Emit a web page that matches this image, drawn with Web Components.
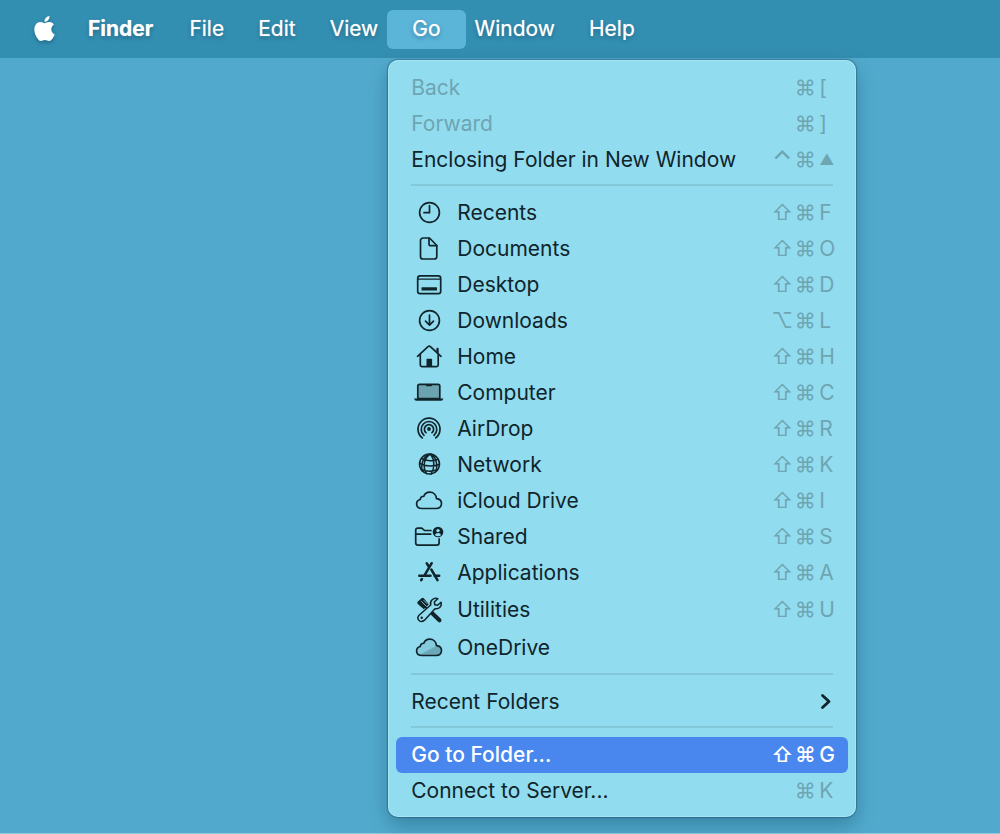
<!DOCTYPE html>
<html lang="en">
<head>
<meta charset="utf-8">
<title>Finder</title>
<style>
html, body { margin: 0; }
body { font-family: Inter, "Liberation Sans", sans-serif; font-size: 21px; line-height: 28px; }
</style>
</head>
<body>
<mac-desktop>
  <menu-bar slot="bar">
    <apple-logo></apple-logo>
    <bar-item strong>Finder</bar-item>
    <bar-item>File</bar-item>
    <bar-item>Edit</bar-item>
    <bar-item>View</bar-item>
    <bar-item open>Go
      <menu-panel slot="menu">
        <menu-row disabled keys=" ,⌘,[">Back</menu-row>
        <menu-row disabled keys=" ,⌘,]">Forward</menu-row>
        <menu-row keys="⌃,⌘,▲">Enclosing Folder in New Window</menu-row>
        <menu-line></menu-line>
        <menu-row icon="clock" keys="⇧,⌘,F">Recents</menu-row>
        <menu-row icon="doc" keys="⇧,⌘,O">Documents</menu-row>
        <menu-row icon="desktop" keys="⇧,⌘,D">Desktop</menu-row>
        <menu-row icon="download" keys="⌥,⌘,L">Downloads</menu-row>
        <menu-row icon="home" keys="⇧,⌘,H">Home</menu-row>
        <menu-row icon="laptop" keys="⇧,⌘,C">Computer</menu-row>
        <menu-row icon="airdrop" keys="⇧,⌘,R">AirDrop</menu-row>
        <menu-row icon="globe" keys="⇧,⌘,K">Network</menu-row>
        <menu-row icon="cloud" keys="⇧,⌘,I">iCloud Drive</menu-row>
        <menu-row icon="shared" keys="⇧,⌘,S">Shared</menu-row>
        <menu-row icon="apps" keys="⇧,⌘,A">Applications</menu-row>
        <menu-row tall icon="tools" keys="⇧,⌘,U">Utilities</menu-row>
        <menu-row tall icon="onedrive">OneDrive</menu-row>
        <menu-line></menu-line>
        <menu-row submenu>Recent Folders</menu-row>
        <menu-line></menu-line>
        <menu-row selected keys="⇧,⌘,G">Go to Folder...</menu-row>
        <menu-row keys=" ,⌘,K">Connect to Server...</menu-row>
      </menu-panel>
    </bar-item>
    <bar-item>Window</bar-item>
    <bar-item>Help</bar-item>
  </menu-bar>
</mac-desktop>

<script>
const define = (name, html, setup) => {
  const template = document.createElement('template');
  template.innerHTML = html;
  customElements.define(name, class extends HTMLElement {
    constructor() {
      super();
      this.attachShadow({ mode: 'open' }).append(template.content.cloneNode(true));
    }
    connectedCallback() { if (setup) setup(this, this.shadowRoot); }
  });
};

define('mac-desktop', `
<style>
:host { display: block; box-sizing: border-box; min-height: 100vh; background: #51aacd; border-bottom: 1px solid #8fcbe0; }
</style>
<slot name="bar"></slot>`);

define('menu-bar', `
<style>
:host { display: block; background: #338fb2; color: #fff; }
nav { display: flex; align-items: center; height: 58px; padding-left: 32px; }
</style>
<nav aria-label="Menu bar"><slot></slot></nav>`);

define('apple-logo', `
<style>
:host { display: block; height: 26px; margin-right: 6px; }
svg { display: block; filter: drop-shadow(0 2px 2px rgba(0,40,60,.35)); overflow: visible; }
</style>
<svg width="25" height="25" viewBox="0 0 24 24" fill="currentColor" role="img" aria-label="Apple"><path d="M12.152 6.896c-.948 0-2.415-1.078-3.96-1.04-2.04.027-3.91 1.183-4.961 3.014-2.117 3.675-.546 9.103 1.519 12.09 1.013 1.454 2.208 3.09 3.792 3.039 1.52-.065 2.09-.987 3.935-.987 1.831 0 2.35.987 3.96.948 1.637-.026 2.676-1.48 3.676-2.948 1.156-1.688 1.636-3.325 1.662-3.415-.039-.013-3.182-1.221-3.22-4.857-.026-3.04 2.48-4.494 2.597-4.559-1.429-2.09-3.623-2.324-4.39-2.376-2-.156-3.675 1.09-4.61 1.09zM15.53 3.83c.843-1.012 1.4-2.427 1.245-3.83-1.207.052-2.662.805-3.532 1.818-.78.896-1.454 2.338-1.273 3.714 1.338.104 2.715-.688 3.559-1.701"/></svg>`);

define('bar-item', `
<style>
:host { display: block; position: relative; margin: 0 -8px; }
:host([strong]) { margin: 0 -6px 0 0; }
button { display: block; height: 39px; padding: 0 25px; border: 0; border-radius: 6px; background: none; color: inherit; font: inherit; text-shadow: 0 0 1px rgba(255,255,255,.6), 0 2px 4px rgba(0,40,60,.4); white-space: nowrap; }
:host([strong]) button { font-weight: 700; }
:host([open]) button { background: #5ab5d9; }
.menu { position: absolute; top: 50px; left: 1px; }
</style>
<button type="button"><slot></slot></button>
<div class="menu"><slot name="menu"></slot></div>`);

define('menu-panel', `
<style>
:host { display: block; box-sizing: border-box; width: 468px; padding: 10px 8px 8px; border-radius: 10px; background: #92dcef; color: #10242b;
  box-shadow: 0 0 1px 1px rgba(20,80,105,.45), inset 0 0 0 1px rgba(190,238,250,.5), 0 8px 20px rgba(0,50,75,.32); }
</style>
<div role="menu"><slot></slot></div>`);

define('menu-line', `
<style>
:host { display: block; padding: 6px 15px 9px; }
hr { margin: 0; border: 0; height: 2px; background: #83c8d9; }
</style>
<hr>`);

define('menu-row', `
<style>
:host { display: block; --dim: #6ea5b3; }
button { display: flex; align-items: center; box-sizing: border-box; width: 100%; height: 36px; padding: 0 15px; border: 0; border-radius: 6px; background: none; color: inherit; font: inherit; text-align: left; white-space: nowrap; }
:host([tall]) button { height: 38px; }
:host([disabled]) button { color: var(--dim); }
:host([selected]) button { background: #4987ee; color: #fff; font-weight: 500; }
:host([selected]) { --dim: #fff; }
.label { flex: 1; }
.keys { display: grid; grid-template-columns: 18px 18px 14px; column-gap: 5px; color: var(--dim); }
.keys span { display: flex; justify-content: center; }
.keys span:last-child { justify-content: flex-start; }
.keys .caret { font-size: 26px; font-weight: 500; }
.keys .triangle { font-size: 15px; }
line-icon { margin-right: 10px; }
.chevron { display: block; }
</style>
<button type="button" role="menuitem"><span class="label"><slot></slot></span></button>`,
(host, root) => {
  const button = root.querySelector('button');
  if (host.hasAttribute('disabled')) button.disabled = true;
  if (host.hasAttribute('icon')) {
    const icon = document.createElement('line-icon');
    icon.setAttribute('name', host.getAttribute('icon'));
    button.prepend(icon);
  }
  if (host.hasAttribute('keys')) {
    const keys = document.createElement('span');
    keys.className = 'keys';
    for (const key of host.getAttribute('keys').split(',')) {
      const cell = document.createElement('span');
      cell.textContent = key.trim();
      if (key === '⌃') cell.className = 'caret';
      if (key === '▲') cell.className = 'triangle';
      keys.append(cell);
    }
    button.append(keys);
  }
  if (host.hasAttribute('submenu')) {
    button.insertAdjacentHTML('beforeend', '<svg class="chevron" width="14" height="20" viewBox="0 0 14 20" fill="none" stroke="currentColor" stroke-width="2.8" stroke-linecap="round" stroke-linejoin="round" aria-hidden="true"><path d="M3.5 3.500 10 9.500 3.500 15.500"/></svg>');
  }
});

const cloud = 'M11 21.5C7.6 21.5 5.6 19.5 5.6 17c0-2.400 1.500-4.100 3.700-4.500C9.200 10.600 10.800 9 12.800 9.300 13.800 6.600 16 5.200 18.700 5.200c3.800 0 6.600 2.800 6.800 6.500 3 .3 5 2.200 5 4.900 0 2.800-2.100 4.900-5.100 4.900Z';
const icons = {
  clock: '<circle cx="18.500" cy="13.500" r="9.900"/><path d="M18.500 6.500v7.200h-5.500"/>',
  doc: '<path d="M12 3h6.500l7.300 7.500V21.500a2.500 2.500 0 0 1-2.500 2.500H12a2.500 2.500 0 0 1-2.500-2.500v-16A2.500 2.500 0 0 1 12 3Z"/><path d="M18 3.300V9a1.700 1.700 0 0 0 1.700 1.700h6"/>',
  desktop: '<rect x="6.700" y="4.800" width="23" height="17.800" rx="2.400"/><path d="M7 8.200h22.500" stroke-width="1.300"/><rect x="10.500" y="16.200" width="15.500" height="3.200" rx=".5" fill="currentColor" stroke="none"/>',
  download: '<circle cx="18.500" cy="13.500" r="9.900"/><path d="M18.500 8v10m-4-3.800 4 4 4-4"/>',
  home: '<path d="M6.500 13.300 17 3.700q1.200-1 2.400 0L30 13.300M9.300 11.500v10.500q0 1.600 1.600 1.600h14.700q1.600 0 1.600-1.600V11.500"/><path d="M26.500 9.500V6" stroke-width="2.400"/><path d="M15.500 23.500v-7q0-.8.800-.8h4q.8 0 .8.800v7Z" fill="currentColor" stroke="none"/>',
  laptop: '<path d="M6.800 19.500V7q0-1.700 1.700-1.700h18.600q1.700 0 1.700 1.700v12.500Z" fill="#6ba3b0"/><path d="M3 19.500h29.400q-.5 2.300-2.400 2.300H5.400q-1.900 0-2.400-2.300Z" fill="currentColor" stroke="none"/><path d="M15 5.500h6v1q0 .8-.8.800h-4.400q-.8 0-.8-.8Z" fill="currentColor" stroke="none"/>',
  airdrop: '<circle cx="18" cy="14" r="1.900" fill="currentColor" stroke="none"/><path d="M15 17.700a4.600 4.600 0 1 1 6 0M13 20.300a7.800 7.800 0 1 1 10 0M11.300 22.900a11 11 0 1 1 13.400 0"/>',
  globe: '<g stroke-width="1.500"><circle cx="18.500" cy="13" r="10"/><path d="M19.500 3c-7 4-8 13-4 19.600M19.500 3c4 5 4.500 14 .5 20M19.500 3c-5 .3-10 7-8.500 17M19.500 3c4.500 1.500 7.500 9 6 16.500M10.500 7.500c5 2.700 12 2.800 16.800.7M8.700 12.500c6 3.200 14.500 3.200 19.700.7M10.500 18.500c5 2.200 11 2.200 16 0"/></g>',
  cloud: `<path d="${cloud}"/>`,
  shared: '<path d="M20 7.500h-6.500L11.700 5.800q-.6-.6-1.500-.6H6.800Q4.700 5.200 4.700 7.300V19.800q0 2.400 2.400 2.400h18.600q2.400 0 2.400-2.400v-4M4.800 11.200H19.700"/><circle cx="27" cy="9" r="5.300" fill="currentColor" stroke="none"/><circle cx="27" cy="7.600" r="1.700" fill="#92dcef" stroke="none"/><path d="M23.900 11.900q.8-1.900 3.100-1.900t3.100 1.900Q29 13.300 27 13.300t-3.100-1.400Z" fill="#92dcef" stroke="none"/>',
  apps: '<g stroke-width="2.500"><path d="M20.700 4.200 13.500 16.400M15.700 4.200l2 3.300M20.300 10.500 26.500 21.200M8.300 16.700h11.200M23.500 16.700h4.700M10.900 20l-.7 1.200"/></g>',
  tools: '<path d="M21.500 17.500 28.500 24.300" stroke-width="4"/><path d="M14 10.500 21 17" stroke-width="2.200"/><path d="m6.600 5.800 4.200-3.800q1-.7 2 .2l5 6-5 5-6-5.300q-1-1-.2-2.100Z" fill="currentColor" stroke="none"/><path d="m10.500 5.500 4.800 4.800M13 4.500l3 3" stroke="#92dcef" stroke-width=".8"/><path d="M26.800 2.700 23.300 6l.5 2.800 2.800.5L30 6.200c1.200 4-2 7.400-6 6.500L13.500 24.200C9.500 27.500 4.800 23.200 8 19.200L19.700 9C18.500 5 22.500 1.200 26.800 2.700Z" fill="#92dcef" stroke-width="1.500"/><circle cx="10.700" cy="21.700" r="1.200" fill="currentColor" stroke="none"/>',
  onedrive: `<path d="${cloud}" fill="#83cbdd" stroke="none"/><path d="M8.500 20.700 24.500 12.500q5 .5 5.500 4-.2 4.500-4.600 5H11Z" fill="#6ba9b8" stroke="none"/><path d="${cloud}"/>`
};

define('line-icon', `
<style>
:host { display: block; width: 36px; height: 28px; }
svg { display: block; }
</style>
<svg width="36" height="28" viewBox="0 0 36 28" fill="none" stroke="currentColor" stroke-width="1.700" stroke-linecap="round" stroke-linejoin="round" aria-hidden="true"></svg>`,
(host, root) => { root.querySelector('svg').innerHTML = icons[host.getAttribute('name')]; });
</script>
</body>
</html>
